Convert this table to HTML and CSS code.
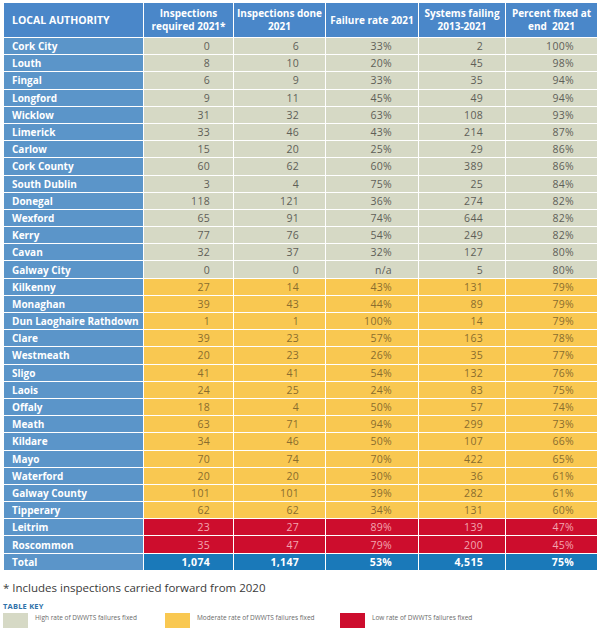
FILE: index.html
```html
<!DOCTYPE html>
<html>
<head>
<meta charset="utf-8">
<link rel="stylesheet" href="styles.css">
</head>
<body>
<div class="page">
<table class="dt">
<colgroup>
<col class="c1"><col class="c2"><col class="c3"><col class="c4"><col class="c5"><col class="c6">
</colgroup>
<thead>
<tr>
<th class="first">LOCAL AUTHORITY</th>
<th>Inspections<br>required 2021*</th>
<th>Inspections done<br>2021</th>
<th>Failure rate 2021</th>
<th>Systems failing<br>2013-2021</th>
<th>Percent fixed at<br>end&nbsp; 2021</th>
</tr>
</thead>
<tbody>
<tr class="g"><th>Cork City</th><td>0</td><td>6</td><td>33%</td><td>2</td><td>100%</td></tr>
<tr class="g"><th>Louth</th><td>8</td><td>10</td><td>20%</td><td>45</td><td>98%</td></tr>
<tr class="g"><th>Fingal</th><td>6</td><td>9</td><td>33%</td><td>35</td><td>94%</td></tr>
<tr class="g"><th>Longford</th><td>9</td><td>11</td><td>45%</td><td>49</td><td>94%</td></tr>
<tr class="g"><th>Wicklow</th><td>31</td><td>32</td><td>63%</td><td>108</td><td>93%</td></tr>
<tr class="g"><th>Limerick</th><td>33</td><td>46</td><td>43%</td><td>214</td><td>87%</td></tr>
<tr class="g"><th>Carlow</th><td>15</td><td>20</td><td>25%</td><td>29</td><td>86%</td></tr>
<tr class="g"><th>Cork County</th><td>60</td><td>62</td><td>60%</td><td>389</td><td>86%</td></tr>
<tr class="g"><th>South Dublin</th><td>3</td><td>4</td><td>75%</td><td>25</td><td>84%</td></tr>
<tr class="g"><th>Donegal</th><td>118</td><td>121</td><td>36%</td><td>274</td><td>82%</td></tr>
<tr class="g"><th>Wexford</th><td>65</td><td>91</td><td>74%</td><td>644</td><td>82%</td></tr>
<tr class="g"><th>Kerry</th><td>77</td><td>76</td><td>54%</td><td>249</td><td>82%</td></tr>
<tr class="g"><th>Cavan</th><td>32</td><td>37</td><td>32%</td><td>127</td><td>80%</td></tr>
<tr class="g"><th>Galway City</th><td>0</td><td>0</td><td>n/a</td><td>5</td><td>80%</td></tr>
<tr class="y"><th>Kilkenny</th><td>27</td><td>14</td><td>43%</td><td>131</td><td>79%</td></tr>
<tr class="y"><th>Monaghan</th><td>39</td><td>43</td><td>44%</td><td>89</td><td>79%</td></tr>
<tr class="y"><th>Dun Laoghaire Rathdown</th><td>1</td><td>1</td><td>100%</td><td>14</td><td>79%</td></tr>
<tr class="y"><th>Clare</th><td>39</td><td>23</td><td>57%</td><td>163</td><td>78%</td></tr>
<tr class="y"><th>Westmeath</th><td>20</td><td>23</td><td>26%</td><td>35</td><td>77%</td></tr>
<tr class="y"><th>Sligo</th><td>41</td><td>41</td><td>54%</td><td>132</td><td>76%</td></tr>
<tr class="y"><th>Laois</th><td>24</td><td>25</td><td>24%</td><td>83</td><td>75%</td></tr>
<tr class="y"><th>Offaly</th><td>18</td><td>4</td><td>50%</td><td>57</td><td>74%</td></tr>
<tr class="y"><th>Meath</th><td>63</td><td>71</td><td>94%</td><td>299</td><td>73%</td></tr>
<tr class="y"><th>Kildare</th><td>34</td><td>46</td><td>50%</td><td>107</td><td>66%</td></tr>
<tr class="y"><th>Mayo</th><td>70</td><td>74</td><td>70%</td><td>422</td><td>65%</td></tr>
<tr class="y"><th>Waterford</th><td>20</td><td>20</td><td>30%</td><td>36</td><td>61%</td></tr>
<tr class="y"><th>Galway County</th><td>101</td><td>101</td><td>39%</td><td>282</td><td>61%</td></tr>
<tr class="y"><th>Tipperary</th><td>62</td><td>62</td><td>34%</td><td>131</td><td>60%</td></tr>
<tr class="r"><th>Leitrim</th><td>23</td><td>27</td><td>89%</td><td>139</td><td>47%</td></tr>
<tr class="r"><th>Roscommon</th><td>35</td><td>47</td><td>79%</td><td>200</td><td>45%</td></tr>
<tr class="t"><th>Total</th><td>1,074</td><td>1,147</td><td>53%</td><td>4,515</td><td>75%</td></tr>
</tbody>
</table>
<p class="note">* Includes inspections carried forward from 2020</p>
<div class="key">
<div class="key-title">TABLE KEY</div>
<div class="key-items">
<div class="key-item k1"><span class="sw sw-g"></span><span class="kl">High rate of DWWTS failures fixed</span></div>
<div class="key-item k2"><span class="sw sw-y"></span><span class="kl">Moderate rate of DWWTS failures fixed</span></div>
<div class="key-item k3"><span class="sw sw-r"></span><span class="kl">Low rate of DWWTS failures fixed</span></div>
</div>
</div>
</div>
</body>
</html>
```
FILE: styles.css
```css
html, body {
  margin: 0;
  padding: 0;
  background: #ffffff;
}
body {
  font-family: "Open Sans", "Liberation Sans", sans-serif;
}
.page {
  padding: 3px 3px 0 3px;
  width: 594px;
}
.dt {
  width: 594px;
  border-collapse: collapse;
  table-layout: fixed;
}
.c1 { width: 140px; }
.c2 { width: 90px; }
.c3 { width: 92px; }
.c4 { width: 93px; }
.c5 { width: 87px; }
.c6 { width: 92px; }

.dt th, .dt td {
  border: 1px solid #ffffff;
  padding: 0;
  white-space: nowrap;
  overflow: hidden;
}
.dt thead th {
  background: #4a87c9;
  color: #ffffff;
  font-size: 10px;
  font-weight: 700;
  line-height: 13px;
  height: 34px;
  text-align: center;
  vertical-align: middle;
  border-top: 0;
}
.dt thead th.first {
  text-align: left;
  padding-left: 8px;
  font-size: 10.5px;
}
.dt tbody th {
  background: #5b95c9;
  color: #ffffff;
  font-size: 10px;
  font-weight: 700;
  text-align: left;
  padding-left: 8px;
  height: 16.2px;
  line-height: 16px;
}
.dt tbody td {
  font-size: 10.5px;
  text-align: right;
  height: 16.2px;
  line-height: 16px;
  letter-spacing: 0.3px;
}
.dt tbody td:nth-child(2) { padding-right: 23px; }
.dt tbody td:nth-child(3) { padding-right: 26px; }
.dt tbody td:nth-child(4) { padding-right: 26px; }
.dt tbody td:nth-child(5) { padding-right: 22px; }
.dt tbody td:nth-child(6) { padding-right: 23px; }

.g td { background: #d6d9c5; color: #5f5f58; }
.y td { background: #f9c851; color: #8a6d2e; }
.r td { background: #cd0d2d; color: #f3a6b0; }
.t th { background: #5b95c9; font-size: 10.5px; }
.t td { background: #1a79b9; color: #ffffff; font-weight: 700; }

.note {
  margin: 9px 0 0 0;
  font-size: 11.5px;
  color: #3a3a3a;
  line-height: 16px;
}
.key-title {
  margin-top: 5px;
  font-size: 7.5px;
  font-weight: 700;
  color: #2f72aa;
  line-height: 10px;
  letter-spacing: 0.2px;
}
.key-items {
  display: flex;
  margin-top: 2px;
}
.key-item {
  display: flex;
  align-items: flex-start;
}
.k1 { width: 162px; }
.k2 { width: 175px; }
.sw {
  display: block;
  width: 25px;
  height: 16px;
}
.sw-g { background: #d6d9c5; }
.sw-y { background: #f9c851; }
.sw-r { background: #cd0d2d; }
.kl {
  font-size: 6.5px;
  color: #6a6a6a;
  margin-left: 7px;
  line-height: 10px;
}
```
